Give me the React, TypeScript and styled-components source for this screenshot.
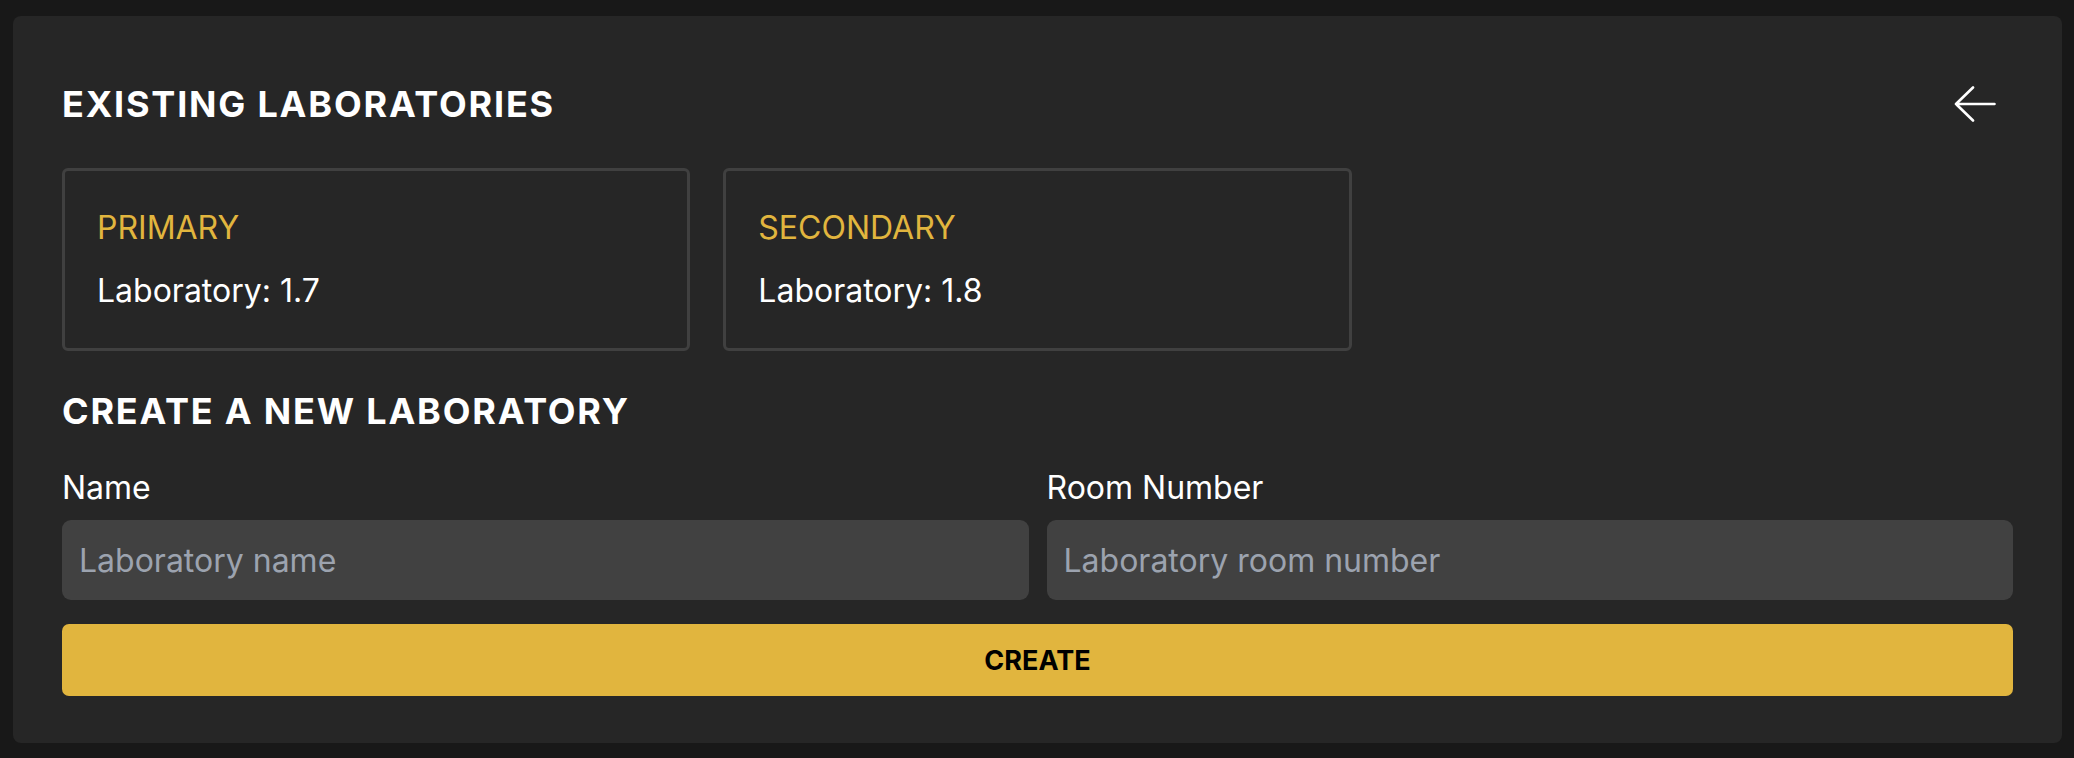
import React, { useState } from 'react';
import styled, { createGlobalStyle } from 'styled-components';

const GlobalStyle = createGlobalStyle`
  html, body {
    margin: 0;
    background: #181818;
    font-family: Inter, 'Noto Sans', sans-serif;
    color: #ffffff;
  }
  * {
    box-sizing: border-box;
  }
`;

const Page = styled.div`
  padding: 16px 12px 15px 13px;
`;

const Panel = styled.section`
  background: #262626;
  border-radius: 8px;
  padding: 68px 49px 47px 49px;
`;

const Header = styled.header`
  display: flex;
  align-items: center;
  justify-content: space-between;
  height: 40px;
`;

const Heading = styled.h2<{ $top?: number }>`
  margin: ${p => p.$top ?? 0}px 0 0 0;
  font-size: 36px;
  line-height: 1;
  font-weight: 700;
  letter-spacing: 1.8px;
  text-transform: uppercase;
`;

const BackButton = styled.button`
  display: flex;
  align-items: center;
  background: none;
  border: none;
  padding: 0;
  margin-right: 17px;
  color: #ffffff;
  cursor: pointer;
`;

const LabGrid = styled.div`
  display: grid;
  grid-template-columns: repeat(3, 1fr);
  gap: 33px;
  margin-top: 44px;
`;

const LabCard = styled.div`
  display: flex;
  flex-direction: column;
  gap: 31px;
  height: 183px;
  padding: 41px 32px 0 32px;
  border: 3px solid #404040;
  border-radius: 6px;
`;

const LabRole = styled.div`
  font-size: 32px;
  line-height: 1;
  color: #e1b53e;
  text-transform: uppercase;
`;

const LabRoom = styled.div`
  font-size: 32px;
  line-height: 1;
`;

const FormRow = styled.div`
  display: grid;
  grid-template-columns: 1fr 1fr;
  gap: 18px;
  margin-top: 43px;
`;

const Field = styled.label`
  display: flex;
  flex-direction: column;
  gap: 16px;
`;

const FieldLabel = styled.span`
  font-size: 32px;
  line-height: 1;
`;

const TextInput = styled.input`
  height: 80px;
  width: 100%;
  padding: 0 17px;
  border: none;
  border-radius: 9px;
  background: #414141;
  color: #ffffff;
  font-family: inherit;
  font-size: 32px;
  outline: none;

  &::placeholder {
    color: #9ca3af;
  }
`;

const CreateButton = styled.button`
  display: block;
  width: 100%;
  height: 72px;
  margin-top: 24px;
  border: none;
  border-radius: 7px;
  background: #e1b53e;
  color: #000000;
  font-family: inherit;
  font-size: 27px;
  font-weight: 700;
  cursor: pointer;
`;

function ArrowLeft() {
  return (
    <svg width='42' height='36' viewBox='0 0 42 36' fill='none'>
      <path
        d='M40.5 18H2M19 1.5L2 18L19 34.5'
        stroke='currentColor'
        strokeWidth='2.6'
        strokeLinecap='round'
        strokeLinejoin='round'
      />
    </svg>
  );
}

const labs = [
  { role: 'Primary', room: '1.7' },
  { role: 'Secondary', room: '1.8' }
];

export default function App() {
  const [name, setName] = useState('');
  const [room, setRoom] = useState('');

  return (
    <Page>
      <GlobalStyle />
      <Panel>
        <Header>
          <Heading>Existing Laboratories</Heading>
          <BackButton aria-label='Back'>
            <ArrowLeft />
          </BackButton>
        </Header>
        <LabGrid>
          {labs.map(lab => (
            <LabCard key={lab.role}>
              <LabRole>{lab.role}</LabRole>
              <LabRoom>Laboratory: {lab.room}</LabRoom>
            </LabCard>
          ))}
        </LabGrid>
        <Heading $top={42}>Create a new laboratory</Heading>
        <FormRow>
          <Field>
            <FieldLabel>Name</FieldLabel>
            <TextInput
              placeholder='Laboratory name'
              value={name}
              onChange={e => setName(e.target.value)}
            />
          </Field>
          <Field>
            <FieldLabel>Room Number</FieldLabel>
            <TextInput
              placeholder='Laboratory room number'
              value={room}
              onChange={e => setRoom(e.target.value)}
            />
          </Field>
        </FormRow>
        <CreateButton>CREATE</CreateButton>
      </Panel>
    </Page>
  );
}
